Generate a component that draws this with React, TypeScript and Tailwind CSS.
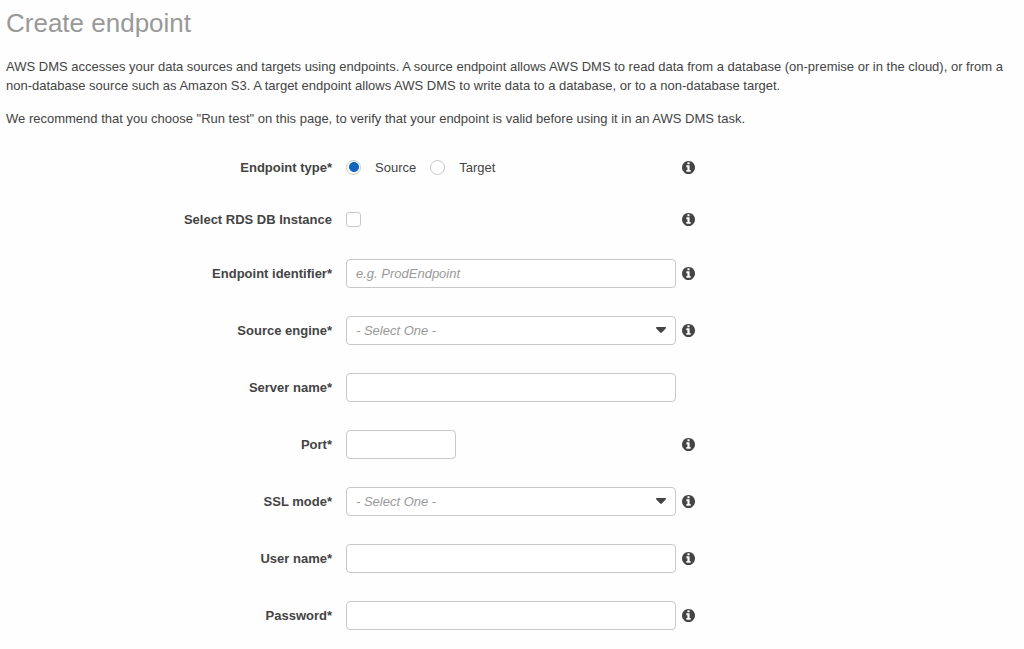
import React, { useState } from "react";

const boxClass =
  "h-[29px] rounded-[4px] border border-[#c8c8c8] bg-white px-[9px] text-[13px] text-[#444] outline-none placeholder:italic placeholder:text-[#999] focus:border-[#146eb4]";

const radioClass =
  "h-[15px] w-[15px] shrink-0 appearance-none rounded-full border border-[#c8c8c8] bg-white checked:bg-[radial-gradient(circle,#1166bb_65%,white_75%)] checked:bg-[length:10px_10px] checked:bg-center checked:bg-no-repeat";

const endpointTypes = ["Source", "Target"];

const InfoIcon = () => (
  <svg viewBox="0 0 1536 1536" className="h-[13px] w-[13px]" fill="currentColor" aria-hidden="true">
    <path d="M1024 1248v-160q0-14-9-23t-23-9h-96v-512q0-14-9-23t-23-9h-320q-14 0-23 9t-9 23v160q0 14 9 23t23 9h96v320h-96q-14 0-23 9t-9 23v160q0 14 9 23t23 9h448q14 0 23-9t9-23zM896 352v-160q0-14-9-23t-23-9h-192q-14 0-23 9t-9 23v160q0 14 9 23t23 9h192q14 0 23-9t9-23zM1536 768q0 209-103 385.500t-279.500 279.500-385.500 103-385.500-103-279.500-279.500-103-385.500 103-385.500 279.500-279.500 385.500-103 385.500 103 279.500 279.500 103 385.500z" />
  </svg>
);

const Row = ({
  label,
  htmlFor,
  info = true,
  short = false,
  children,
}: {
  label: string;
  htmlFor?: string;
  info?: boolean;
  short?: boolean;
  children: React.ReactNode;
}) => {
  const name = label.replace("*", "");

  return (
    <div
      role={htmlFor ? undefined : "radiogroup"}
      aria-label={htmlFor ? undefined : name}
      className={`grid grid-cols-[minmax(0,334px)_minmax(0,330px)_auto] items-center gap-x-[6px] ${
        short ? "h-6" : "h-[29px]"
      }`}
    >
      {htmlFor ? (
        <label htmlFor={htmlFor} className="pr-2 text-right font-bold">
          {label}
        </label>
      ) : (
        <span className="pr-2 text-right font-bold">{label}</span>
      )}
      <div className="flex items-center">{children}</div>
      {info && (
        <button type="button" aria-label={`About ${name}`} className="w-fit cursor-pointer">
          <InfoIcon />
        </button>
      )}
    </div>
  );
};

const SelectBox = ({ id, options }: { id: string; options: string[] }) => {
  const [value, setValue] = useState("");

  return (
    <div className="relative w-full">
      <select
        id={id}
        value={value}
        onChange={(e) => setValue(e.target.value)}
        className={`${boxClass} w-full appearance-none ${value ? "" : "text-[#999] italic"}`}
      >
        <option value="">- Select One -</option>
        {options.map((option) => (
          <option key={option} value={option}>
            {option}
          </option>
        ))}
      </select>
      <svg
        viewBox="0 0 10 6"
        className="pointer-events-none absolute top-[11px] right-[10px] h-[6px] w-[10px]"
        fill="currentColor"
        aria-hidden="true"
      >
        <path d="M0.8 0h8.400q.8 0 .8.700 0 .4-.3.700l-3.900 4q-.3.400-.8.400t-.8-.4l-3.900-4q-.3-.3-.3-.7 0-.7.8-.7z" />
      </svg>
    </div>
  );
};

export default function App() {
  const [endpointType, setEndpointType] = useState("Source");

  return (
    <main className="min-h-screen bg-[#fefefe] px-[6px] pt-[5px] pb-4 font-['Liberation_Sans',Arial,sans-serif] text-[13px] leading-[19px] text-[#444]">
      <h1 className="mb-4 text-[26px] leading-9 text-[#999]">Create endpoint</h1>
      <p className="mb-[14px]">
        AWS DMS accesses your data sources and targets using endpoints. A source endpoint allows AWS DMS to read data
        from a database (on-premise or in the cloud), or from a non-database source such as Amazon S3. A target endpoint
        allows AWS DMS to write data to a database, or to a non-database target.
      </p>
      <p>
        We recommend that you choose "Run test" on this page, to verify that your endpoint is valid before using it in
        an AWS DMS task.
      </p>

      <form className="mt-[27px] flex flex-col gap-7" onSubmit={(e) => e.preventDefault()}>
        <Row label="Endpoint type*" short>
          <div className="flex gap-[14px]">
            {endpointTypes.map((type) => (
              <label key={type} className="flex items-center gap-[14px]">
                <input
                  type="radio"
                  name="endpoint-type"
                  value={type}
                  checked={endpointType === type}
                  onChange={() => setEndpointType(type)}
                  className={radioClass}
                />
                {type}
              </label>
            ))}
          </div>
        </Row>
        <Row label="Select RDS DB Instance" htmlFor="rds-instance" short>
          <input
            id="rds-instance"
            type="checkbox"
            className="h-[15px] w-[15px] appearance-none rounded-[3px] border border-[#c8c8c8] bg-white checked:bg-[#1166bb]"
          />
        </Row>
        <Row label="Endpoint identifier*" htmlFor="identifier">
          <input id="identifier" type="text" placeholder="e.g. ProdEndpoint" className={`${boxClass} w-full`} />
        </Row>
        <Row label="Source engine*" htmlFor="engine">
          <SelectBox id="engine" options={["mysql", "oracle", "postgres", "sqlserver"]} />
        </Row>
        <Row label="Server name*" htmlFor="server" info={false}>
          <input id="server" type="text" className={`${boxClass} w-full`} />
        </Row>
        <Row label="Port*" htmlFor="port">
          <input id="port" type="text" className={`${boxClass} w-1/3`} />
        </Row>
        <Row label="SSL mode*" htmlFor="ssl-mode">
          <SelectBox id="ssl-mode" options={["none", "require", "verify-ca", "verify-full"]} />
        </Row>
        <Row label="User name*" htmlFor="username">
          <input id="username" type="text" className={`${boxClass} w-full`} />
        </Row>
        <Row label="Password*" htmlFor="password">
          <input id="password" type="password" className={`${boxClass} w-full`} />
        </Row>
      </form>
    </main>
  );
}
